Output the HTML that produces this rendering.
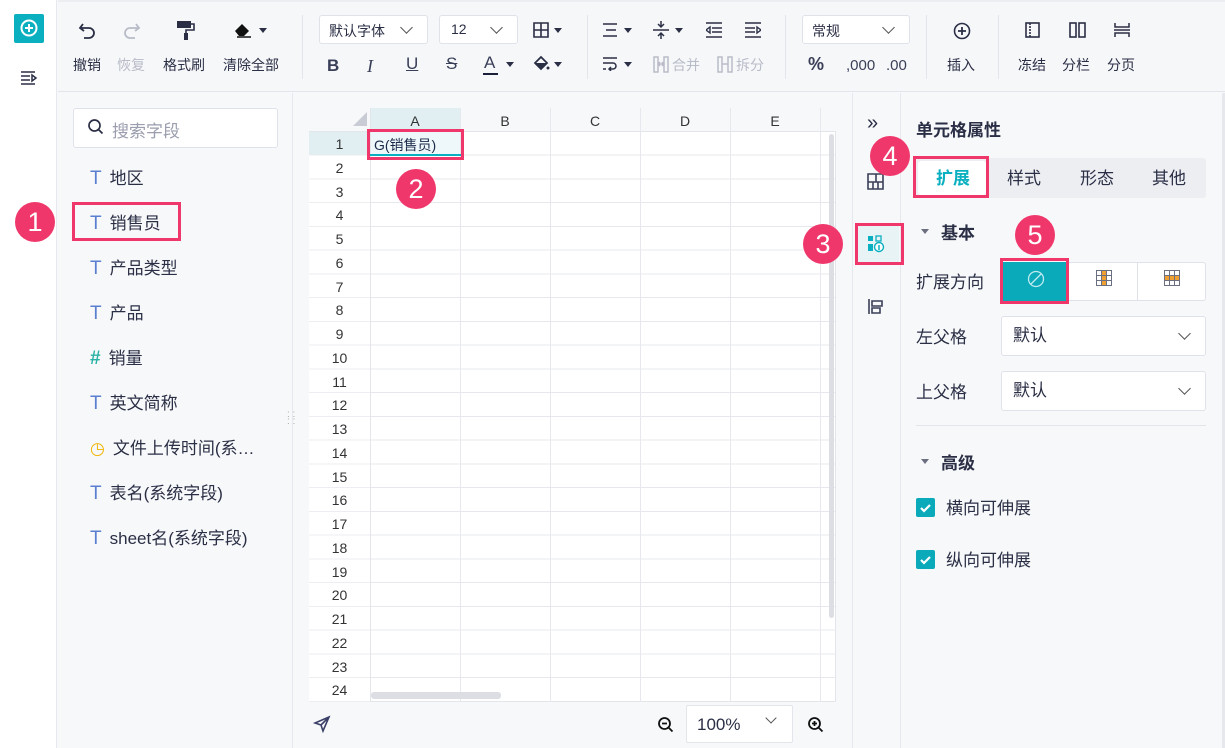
<!DOCTYPE html>
<html><head><meta charset="utf-8"><style>
*{box-sizing:border-box;margin:0;padding:0}
body{width:1225px;height:748px;overflow:hidden;background:#f7f8fa;font-family:"Liberation Sans","Noto Sans CJK SC",sans-serif;color:#2b2f45;position:relative}
.a{position:absolute}
.t{font-size:14px;color:#2b2f45;white-space:nowrap}
.dis{color:#b8bcc8}
.sel{background:#fff;border:1px solid #dfe2e8;border-radius:3px}
.circ{position:absolute;width:40px;height:40px;border-radius:50%;background:#f0376b;color:#fff;font-size:27px;text-align:center;line-height:40px;font-family:"Liberation Sans",sans-serif}
.box{position:absolute;border:3px solid #f0376b}
.fld{position:absolute;left:90px;font-size:17px;color:#2b2f45}
.fld i{font-style:normal;color:#5b7fd0;margin-right:8px;font-size:19px}
.rn{position:absolute;left:309px;width:61px;text-align:center;font-size:14px;color:#333}
.ch{position:absolute;top:108px;height:24px;line-height:26px;text-align:center;font-size:14px;color:#333;width:90px}
.lbl{position:absolute;left:916px;font-size:17px}
.dd{position:absolute;left:1001px;width:205px;height:40px;background:#fff;border:1px solid #dfe2e8;border-radius:3px;font-size:17px;line-height:38px;padding-left:11px}
.chev{position:absolute;width:9px;height:9px;border-right:1.6px solid #555;border-bottom:1.6px solid #555;transform:rotate(45deg)}
</style></head><body>
<div class="a" style="left:0;top:0;width:57px;height:748px;background:#fff;border-right:1px solid #e6e8ee"></div>
<div class="a" style="left:14px;top:14px;width:30px;height:29px;background:#0bb0c0;border-radius:2px"></div>
<svg class="a" style="left:19px;top:18px" width="20" height="20"><circle cx="10" cy="10" r="7.5" fill="none" stroke="#fff" stroke-width="2"/><path d="M10 6v8M6 10h8" stroke="#fff" stroke-width="2"/></svg>
<svg class="a" style="left:20px;top:70px" width="18" height="16"><path d="M1 2h14M1 6h9M1 10h9M1 14h14M12 5l4 3-4 3z" stroke="#2b2f45" stroke-width="1.5" fill="none"/></svg>
<div class="a" style="left:58px;top:0;width:1167px;height:92px;background:#f6f7f9;border-bottom:1px solid #e3e5ea;border-top:2px solid #eceef2"></div>
<svg class="a" style="left:78px;top:20px" width="20" height="20"><path d="M5 4 L2 8 L6 11 M2 8 H11 a5 5 0 0 1 0 10 H6" stroke="#2b2f45" stroke-width="1.8" fill="none"/></svg>
<svg class="a" style="left:121px;top:20px" width="20" height="20"><path d="M15 4 L18 8 L14 11 M18 8 H9 a5 5 0 0 0 0 10 H14" stroke="#b8bcc8" stroke-width="1.8" fill="none"/></svg>
<svg class="a" style="left:175px;top:18px" width="22" height="24"><rect x="2" y="3" width="14" height="7" fill="#2b2f45"/><path d="M16 6h3v6h-8v3" stroke="#2b2f45" stroke-width="1.6" fill="none"/><rect x="9" y="15" width="4" height="7" fill="#2b2f45"/></svg>
<svg class="a" style="left:233px;top:21px" width="22" height="18"><path d="M2 10 L9 3 L16 10 L11 15 H6 Z" fill="#111"/><path d="M4 16h14" stroke="#111" stroke-width="1.5"/></svg>
<div class="a" style="left:259px;top:28px;border:4px solid transparent;border-top:5px solid #2b2f45"></div>
<div class="a t" style="left:73px;top:55px">撤销</div>
<div class="a t dis" style="left:117px;top:55px">恢复</div>
<div class="a t" style="left:163px;top:55px">格式刷</div>
<div class="a t" style="left:223px;top:55px">清除全部</div>
<div class="a" style="left:302px;top:15px;width:1px;height:64px;background:#e3e5ea"></div>
<div class="a sel" style="left:319px;top:15px;width:109px;height:29px"></div>
<div class="a t" style="left:329px;top:21px">默认字体</div>
<div class="chev" style="left:402px;top:23px"></div>
<div class="a sel" style="left:439px;top:15px;width:79px;height:29px"></div>
<div class="a t" style="left:451px;top:21px">12</div>
<div class="chev" style="left:492px;top:23px"></div>
<svg class="a" style="left:533px;top:22px" width="16" height="16"><path d="M1 1h14v14H1zM8 1v14M1 8h14" stroke="#2b2f45" stroke-width="1.6" fill="none"/></svg>
<div class="a" style="left:554px;top:28px;border:4px solid transparent;border-top:5px solid #2b2f45"></div>
<div class="a" style="left:327px;top:56px;font-size:17px;font-weight:bold;color:#3a3f58">B</div>
<div class="a" style="left:367px;top:56px;font-size:18px;font-style:italic;font-family:'Liberation Serif',serif;color:#3a3f58">I</div>
<div class="a" style="left:406px;top:54px;font-size:17px;text-decoration:underline;color:#3a3f58">U</div>
<div class="a" style="left:446px;top:54px;font-size:17px;text-decoration:line-through;color:#3a3f58">S</div>
<div class="a" style="left:484px;top:53px;font-size:17px;color:#3a3f58">A</div>
<div class="a" style="left:483px;top:73px;width:15px;height:2px;background:#1a1f3a"></div>
<div class="a" style="left:506px;top:62px;border:4px solid transparent;border-top:5px solid #2b2f45"></div>
<svg class="a" style="left:532px;top:55px" width="18" height="18"><path d="M3 8 L9 2 L15 8 L9 14 Z" fill="none" stroke="#2b2f45" stroke-width="1.8"/><path d="M3 8h12l-6 6z" fill="#2b2f45"/><circle cx="16" cy="13" r="1.5" fill="#2b2f45"/></svg>
<div class="a" style="left:554px;top:62px;border:4px solid transparent;border-top:5px solid #2b2f45"></div>
<div class="a" style="left:587px;top:15px;width:1px;height:64px;background:#e3e5ea"></div>
<svg class="a" style="left:603px;top:23px" width="16" height="14"><path d="M0 1h14M3 7h10M0 13h14" stroke="#2b2f45" stroke-width="1.5"/></svg>
<div class="a" style="left:624px;top:28px;border:4px solid transparent;border-top:5px solid #2b2f45"></div>
<svg class="a" style="left:653px;top:20px" width="16" height="20"><path d="M0 10h16M8 1v6M8 13v6M5 4l3 3 3-3M5 16l3-3 3 3" stroke="#2b2f45" stroke-width="1.5" fill="none"/></svg>
<div class="a" style="left:675px;top:28px;border:4px solid transparent;border-top:5px solid #2b2f45"></div>
<svg class="a" style="left:706px;top:22px" width="16" height="16"><path d="M0 1h16M6 6h10M6 10h10M0 15h16M4 5L0 8l4 3z" stroke="#2b2f45" stroke-width="1.4" fill="none"/></svg>
<svg class="a" style="left:745px;top:22px" width="16" height="16"><path d="M0 1h16M0 6h10M0 10h10M0 15h16M12 5l4 3-4 3z" stroke="#2b2f45" stroke-width="1.4" fill="none"/></svg>
<svg class="a" style="left:603px;top:57px" width="16" height="14"><path d="M0 1h14M0 6h10a3 3 0 0 1 0 6H6M8 10l-2 2 2 2M0 12h3" stroke="#2b2f45" stroke-width="1.5" fill="none"/></svg>
<div class="a" style="left:624px;top:62px;border:4px solid transparent;border-top:5px solid #2b2f45"></div>
<svg class="a" style="left:653px;top:56px" width="16" height="17"><path d="M1 1h4v15H1zM11 1h4v15h-4zM5 8h6M7 6l-2 2 2 2M9 6l2 2-2 2" stroke="#b8bcc8" stroke-width="1.5" fill="none"/></svg>
<div class="a t dis" style="left:672px;top:55px">合并</div>
<svg class="a" style="left:717px;top:56px" width="16" height="17"><path d="M1 1h4v15H1zM11 1h4v15h-4zM5 8h6" stroke="#b8bcc8" stroke-width="1.5" fill="none"/></svg>
<div class="a t dis" style="left:736px;top:55px">拆分</div>
<div class="a" style="left:785px;top:15px;width:1px;height:64px;background:#e3e5ea"></div>
<div class="a sel" style="left:802px;top:15px;width:108px;height:29px"></div>
<div class="a t" style="left:812px;top:21px">常规</div>
<div class="chev" style="left:884px;top:23px"></div>
<div class="a" style="left:808px;top:54px;font-size:18px;font-weight:bold;color:#3a3f58">%</div>
<div class="a" style="left:846px;top:57px;font-size:15px;color:#3a3f58">,000</div>
<div class="a" style="left:886px;top:57px;font-size:15px;color:#3a3f58">.00</div>
<div class="a" style="left:926px;top:15px;width:1px;height:64px;background:#e3e5ea"></div>
<svg class="a" style="left:952px;top:21px" width="20" height="20"><circle cx="10" cy="10" r="7.5" fill="none" stroke="#2b2f45" stroke-width="1.6"/><path d="M10 6v8M6 10h8" stroke="#2b2f45" stroke-width="1.8"/></svg>
<div class="a t" style="left:947px;top:55px">插入</div>
<div class="a" style="left:998px;top:15px;width:1px;height:64px;background:#e3e5ea"></div>
<svg class="a" style="left:1025px;top:22px" width="16" height="16"><rect x="1" y="1" width="13" height="14" fill="none" stroke="#2b2f45" stroke-width="1.6"/><path d="M5 1v14" stroke="#2b2f45" stroke-width="1.6" stroke-dasharray="2 1"/></svg>
<svg class="a" style="left:1069px;top:22px" width="18" height="16"><rect x="1" y="1" width="6" height="14" fill="none" stroke="#2b2f45" stroke-width="1.6"/><rect x="10" y="1" width="6" height="14" fill="none" stroke="#2b2f45" stroke-width="1.6"/></svg>
<svg class="a" style="left:1114px;top:22px" width="16" height="16"><path d="M1 1v4h14V1M1 15v-4h14v4M0 8h16" stroke="#2b2f45" stroke-width="1.5" fill="none"/></svg>
<div class="a t" style="left:1018px;top:55px">冻结</div>
<div class="a t" style="left:1062px;top:55px">分栏</div>
<div class="a t" style="left:1107px;top:55px">分页</div>
<div class="a" style="left:292px;top:93px;width:1px;height:655px;background:#e6e8ee"></div>
<div class="a" style="left:73px;top:108px;width:205px;height:40px;background:#fff;border:1px solid #dfe2e8;border-radius:3px"></div>
<svg class="a" style="left:87px;top:118px" width="18" height="18"><circle cx="7.5" cy="7.5" r="5.5" fill="none" stroke="#2b2f45" stroke-width="1.7"/><path d="M11.5 11.5l4 4" stroke="#2b2f45" stroke-width="1.8"/></svg>
<div class="a" style="left:112px;top:117px;font-size:17px;color:#9a9eae">搜索字段</div>
<div class="fld" style="top:164px"><i>T</i>地区</div>
<div class="fld" style="top:209px"><i>T</i>销售员</div>
<div class="fld" style="top:254px"><i>T</i>产品类型</div>
<div class="fld" style="top:299px"><i>T</i>产品</div>
<div class="fld" style="top:344px"><i style="color:#2ab3a6;font-weight:bold">#</i>销量</div>
<div class="fld" style="top:389px"><i>T</i>英文简称</div>
<div class="fld" style="top:434px"><i style="color:#f0b400;font-size:17px">◷</i>文件上传时间(系…</div>
<div class="fld" style="top:479px"><i>T</i>表名(系统字段)</div>
<div class="fld" style="top:524px"><i>T</i>sheet名(系统字段)</div>
<div class="a" style="left:287px;top:411px;font-size:10px;color:#aaa;line-height:7px">: :<br>: :</div>
<div class="a" style="left:309px;top:108px;width:527px;height:594px;background:#fff;border:1px solid #e3e5ea;
background-image:repeating-linear-gradient(to bottom,transparent 0,transparent 22.75px,#e6e8ee 22.75px,#e6e8ee 23.75px);background-position:0 23px"></div>
<div class="a" style="left:309px;top:108px;width:527px;height:24px;background:#f7f8fa;border-bottom:1px solid #e3e5ea"></div>
<div class="a" style="left:309px;top:132px;width:61px;height:570px;background:#fff;background-image:repeating-linear-gradient(to bottom,transparent 0,transparent 22.75px,#eceef2 22.75px,#eceef2 23.75px)"></div>
<div class="a" style="left:370px;top:108px;width:90px;height:24px;background:#e1eff3"></div>
<div class="a" style="left:309px;top:132px;width:61px;height:23px;background:#e1eff3"></div>
<div class="a" style="left:370px;top:132px;width:90px;height:23px;background:#eef7f9"></div>
<div class="a" style="left:353px;top:112px;width:0;height:0;border-left:14px solid transparent;border-bottom:14px solid #c9ccd4"></div>
<div class="a" style="left:370px;top:108px;width:1px;height:594px;background:#e3e5ea"></div>
<div class="a" style="left:460px;top:108px;width:1px;height:594px;background:#e6e8ee"></div>
<div class="a" style="left:550px;top:108px;width:1px;height:594px;background:#e6e8ee"></div>
<div class="a" style="left:640px;top:108px;width:1px;height:594px;background:#e6e8ee"></div>
<div class="a" style="left:730px;top:108px;width:1px;height:594px;background:#e6e8ee"></div>
<div class="a" style="left:820px;top:108px;width:1px;height:594px;background:#e6e8ee"></div>
<div class="ch" style="left:370px">A</div><div class="ch" style="left:460px">B</div><div class="ch" style="left:550px">C</div><div class="ch" style="left:640px">D</div><div class="ch" style="left:730px">E</div>
<div class="a" style="left:829px;top:134px;width:5px;height:484px;background:#dcdee3;border-radius:3px"></div>
<div class="a" style="left:371px;top:692px;width:130px;height:7px;background:#dcdee3;border-radius:3px"></div>
<div class="rn" style="top:136px">1</div><div class="rn" style="top:160px">2</div><div class="rn" style="top:184px">3</div><div class="rn" style="top:207px">4</div><div class="rn" style="top:231px">5</div><div class="rn" style="top:255px">6</div><div class="rn" style="top:279px">7</div><div class="rn" style="top:302px">8</div><div class="rn" style="top:326px">9</div><div class="rn" style="top:350px">10</div><div class="rn" style="top:374px">11</div><div class="rn" style="top:397px">12</div><div class="rn" style="top:421px">13</div><div class="rn" style="top:445px">14</div><div class="rn" style="top:469px">15</div><div class="rn" style="top:492px">16</div><div class="rn" style="top:516px">17</div><div class="rn" style="top:540px">18</div><div class="rn" style="top:564px">19</div><div class="rn" style="top:587px">20</div><div class="rn" style="top:611px">21</div><div class="rn" style="top:635px">22</div><div class="rn" style="top:659px">23</div><div class="rn" style="top:682px">24</div>
<div class="a" style="left:374px;top:135px;font-size:14px;color:#1a2a4a">G(销售员)</div>
<div class="a" style="left:370px;top:154px;width:92px;height:2px;background:#0bb0c0"></div>
<svg class="a" style="left:313px;top:715px" width="18" height="18"><path d="M16 2 L2 8 L8 10 L10 16 Z M8 10 L16 2" fill="none" stroke="#3a3f68" stroke-width="1.6"/></svg>
<svg class="a" style="left:657px;top:716px" width="18" height="18"><circle cx="7.5" cy="7.5" r="5.5" fill="none" stroke="#111" stroke-width="1.8"/><path d="M5 7.5h5M11.5 11.5l4 4" stroke="#111" stroke-width="1.8"/></svg>
<div class="a" style="left:686px;top:705px;width:107px;height:38px;background:#fff;border:1px solid #e3e5ea;border-radius:2px"></div>
<div class="a" style="left:697px;top:715px;font-size:17px;color:#2b2f45">100%</div>
<div class="chev" style="left:767px;top:714px;width:8px;height:8px"></div>
<svg class="a" style="left:807px;top:716px" width="18" height="18"><circle cx="7.5" cy="7.5" r="5.5" fill="none" stroke="#111" stroke-width="1.8"/><path d="M5 7.5h5M7.5 5v5M11.5 11.5l4 4" stroke="#111" stroke-width="1.8"/></svg>
<div class="a" style="left:852px;top:93px;width:1px;height:655px;background:#e6e8ee"></div>
<div class="a" style="left:900px;top:93px;width:1px;height:655px;background:#e6e8ee"></div>
<div class="a" style="left:867px;top:112px;font-size:20px;color:#2b2f45">»</div>
<svg class="a" style="left:867px;top:173px" width="17" height="17"><path d="M1 1h15v15H1zM1 9h15M6 9v7M11 9v7M9 1v8" stroke="#3a3f58" stroke-width="1.6" fill="none"/></svg>
<div class="a" style="left:857px;top:226px;width:42px;height:37px;background:#e8f3f6"></div>
<svg class="a" style="left:867px;top:235px" width="18" height="18"><rect x="1" y="1" width="5" height="5" fill="#0bb0c0"/><rect x="9" y="1" width="5" height="5" fill="none" stroke="#0bb0c0" stroke-width="1.3"/><rect x="1" y="9" width="5" height="7" fill="#0bb0c0"/><circle cx="12" cy="12" r="4.5" fill="#fff" stroke="#0bb0c0" stroke-width="1.4"/><path d="M12 10v5" stroke="#0bb0c0" stroke-width="1.5"/></svg>
<svg class="a" style="left:867px;top:298px" width="17" height="17"><path d="M2 1v15M5 3h10v5H5zM5 10h8v5H5z" stroke="#3a3f58" stroke-width="1.6" fill="none"/></svg>
<div class="a" style="left:916px;top:116px;font-size:17px;font-weight:bold;color:#2b2f45">单元格属性</div>
<div class="a" style="left:915px;top:158px;width:291px;height:40px;background:#eceef2;border-radius:3px"></div>
<div class="a" style="left:918px;top:161px;width:68px;height:34px;background:#fff;border-radius:3px"></div>
<div class="a" style="left:936px;top:164px;font-size:17px;font-weight:bold;color:#0bb0c0">扩展</div>
<div class="a" style="left:1007px;top:164px;font-size:17px">样式</div>
<div class="a" style="left:1080px;top:164px;font-size:17px">形态</div>
<div class="a" style="left:1152px;top:164px;font-size:17px">其他</div>
<div class="a" style="left:921px;top:229px;border:4px solid transparent;border-top:5px solid #6b6f80"></div>
<div class="a" style="left:941px;top:219px;font-size:17px;font-weight:bold">基本</div>
<div class="lbl" style="top:268px">扩展方向</div>
<div class="a" style="left:1001px;top:262px;width:205px;height:39px;background:#fff;border:1px solid #dfe2e8;border-radius:3px"></div>
<div class="a" style="left:1137px;top:262px;width:1px;height:39px;background:#dfe2e8"></div>
<div class="a" style="left:1003px;top:262px;width:65px;height:39px;background:#0aaabb"></div>
<svg class="a" style="left:1026px;top:269px" width="20" height="20"><circle cx="10" cy="10" r="7.5" fill="none" stroke="#bfeaf0" stroke-width="1.3"/><path d="M5 15L15 5" stroke="#bfeaf0" stroke-width="1.3"/></svg>
<svg class="a" style="left:1096px;top:270px" width="16" height="16"><rect x="0" y="0" width="16" height="16" fill="#6b6f80"/><g fill="#fff"><rect x="1" y="1" width="4" height="4"/><rect x="6" y="1" width="4" height="4" fill="#f0a030"/><rect x="11" y="1" width="4" height="4"/><rect x="1" y="6" width="4" height="4"/><rect x="6" y="6" width="4" height="4" fill="#f0a030"/><rect x="11" y="6" width="4" height="4"/><rect x="1" y="11" width="4" height="4"/><rect x="6" y="11" width="4" height="4" fill="#f0a030"/><rect x="11" y="11" width="4" height="4"/></g></svg>
<svg class="a" style="left:1164px;top:270px" width="16" height="16"><rect x="0" y="0" width="16" height="16" fill="#6b6f80"/><g fill="#fff"><rect x="1" y="1" width="4" height="4"/><rect x="6" y="1" width="4" height="4"/><rect x="11" y="1" width="4" height="4"/><rect x="1" y="6" width="4" height="4" fill="#f0a030"/><rect x="6" y="6" width="4" height="4" fill="#f0a030"/><rect x="11" y="6" width="4" height="4" fill="#f0a030"/><rect x="1" y="11" width="4" height="4"/><rect x="6" y="11" width="4" height="4"/><rect x="11" y="11" width="4" height="4"/></g></svg>
<div class="lbl" style="top:323px">左父格</div>
<div class="dd" style="top:316px">默认<div class="chev" style="left:178px;top:12px"></div></div>
<div class="lbl" style="top:378px">上父格</div>
<div class="dd" style="top:371px">默认<div class="chev" style="left:178px;top:12px"></div></div>
<div class="a" style="left:916px;top:425px;width:290px;height:1px;background:#e3e5ea"></div>
<div class="a" style="left:921px;top:459px;border:4px solid transparent;border-top:5px solid #6b6f80"></div>
<div class="a" style="left:941px;top:449px;font-size:17px;font-weight:bold">高级</div>
<div class="a" style="left:916px;top:498px;width:19px;height:19px;background:#0aaabb;border-radius:2px"></div>
<svg class="a" style="left:916px;top:498px" width="19" height="19"><path d="M5 10l3 3 6-6" stroke="#fff" stroke-width="2.2" fill="none"/></svg>
<div class="a" style="left:946px;top:494px;font-size:17px">横向可伸展</div>
<div class="a" style="left:916px;top:550px;width:19px;height:19px;background:#0aaabb;border-radius:2px"></div>
<svg class="a" style="left:916px;top:550px" width="19" height="19"><path d="M5 10l3 3 6-6" stroke="#fff" stroke-width="2.2" fill="none"/></svg>
<div class="a" style="left:946px;top:546px;font-size:17px">纵向可伸展</div>
<div class="a" style="left:1222px;top:93px;width:3px;height:655px;background:#e6e8ee"></div>
<div class="box" style="left:72px;top:202px;width:109px;height:39px"></div>
<div class="circ" style="left:15px;top:202px">1</div>
<div class="box" style="left:367px;top:129px;width:97px;height:31px"></div>
<div class="circ" style="left:396px;top:169px">2</div>
<div class="box" style="left:855px;top:223px;width:49px;height:42px"></div>
<div class="circ" style="left:803px;top:224px">3</div>
<div class="circ" style="left:870px;top:136px">4</div>
<div class="box" style="left:913px;top:156px;width:76px;height:42px"></div>
<div class="circ" style="left:1015px;top:215px">5</div>
<div class="box" style="left:1000px;top:258px;width:69px;height:46px"></div>
</body></html>
